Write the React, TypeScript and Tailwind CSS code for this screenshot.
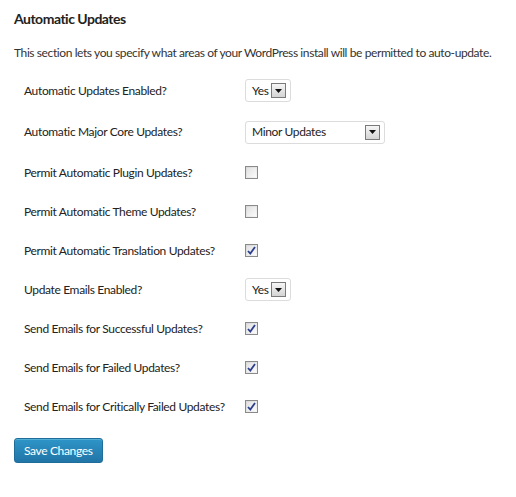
import React from "react";

type Row =
  | { label: string; kind: "select"; value: string; wide?: boolean; h: string }
  | { label: string; kind: "check"; checked: boolean; h: string };

const rows: Row[] = [
  { label: "Automatic Updates Enabled?", kind: "select", value: "Yes", h: "h-[41px]" },
  { label: "Automatic Major Core Updates?", kind: "select", value: "Minor Updates", wide: true, h: "h-[42px]" },
  { label: "Permit Automatic Plugin Updates?", kind: "check", checked: false, h: "h-[39px]" },
  { label: "Permit Automatic Theme Updates?", kind: "check", checked: false, h: "h-[39px]" },
  { label: "Permit Automatic Translation Updates?", kind: "check", checked: true, h: "h-[39px]" },
  { label: "Update Emails Enabled?", kind: "select", value: "Yes", h: "h-[39px]" },
  { label: "Send Emails for Successful Updates?", kind: "check", checked: true, h: "h-[39px]" },
  { label: "Send Emails for Failed Updates?", kind: "check", checked: true, h: "h-[39px]" },
  { label: "Send Emails for Critically Failed Updates?", kind: "check", checked: true, h: "h-[39px]" },
];

function Select({ value, wide }: { value: string; wide?: boolean }) {
  return (
    <div
      className={`shrink-0 flex items-center justify-between h-[23px] border border-[#dcdcdc] rounded-[3px] bg-white pl-[6px] pr-[4px] ${
        wide ? "w-[140px]" : "w-[46px]"
      }`}
    >
      <span className="text-[12px] tracking-[-0.35px] text-[#222] whitespace-nowrap">{value}</span>
      <span className="shrink-0 flex items-center justify-center w-[15px] h-[15px] border border-[#7a7a7a] bg-gradient-to-b from-[#f6f6f6] to-[#d4d4d4]">
        <svg width="7" height="4" viewBox="0 0 7 4">
          <path d="M0 0h7L3.5 4z" fill="#111" />
        </svg>
      </span>
    </div>
  );
}

function Checkbox({ checked }: { checked: boolean }) {
  return (
    <span className="shrink-0 flex items-center justify-center w-[13px] h-[13px] border border-[#8a8a8a] bg-gradient-to-br from-[#d6d6d6] to-[#f7f7f7] p-[1px]">
      <span className="flex items-center justify-center w-full h-full bg-gradient-to-br from-[#e2e2e2] to-[#fafafa]">
        {checked && (
          <svg width="9" height="9" viewBox="0 0 9 9">
            <path d="M1 5l2.3 2.5L8 1" stroke="#2c3f8f" strokeWidth="1.8" fill="none" />
          </svg>
        )}
      </span>
    </span>
  );
}

export default function App() {
  return (
    <div className="w-[516px] h-[497px] bg-white text-[#333] font-['Lato',sans-serif] px-[14px]">
      <h2 className="pt-[10px] text-[14px] tracking-[-0.5px] font-bold text-[#222] leading-[18px]">Automatic Updates</h2>
      <p className="mt-[17px] text-[12px] tracking-[-0.4px] leading-[16px] text-[#333] whitespace-nowrap">
        This section lets you specify what areas of your WordPress install will be permitted to auto-update.
      </p>
      <div className="mt-[9px] flex flex-col">
        {rows.map((r) => (
          <div key={r.label} className={`flex items-center ${r.h}`}>
            <div className="w-[231px] shrink-0 pl-[10px] text-[12px] tracking-[-0.35px] text-[#222] whitespace-nowrap">
              {r.label}
            </div>
            {r.kind === "select" ? <Select value={r.value} wide={r.wide} /> : <Checkbox checked={r.checked} />}
          </div>
        ))}
      </div>
      <button className="mt-[12px] h-[25px] px-[9px] rounded-[3px] border border-[#1f6d9b] bg-gradient-to-b from-[#2e95c8] to-[#2275a7] text-white text-[12px] tracking-[-0.35px] leading-none shadow-[inset_0_1px_0_rgba(120,200,230,0.5)]">
        Save Changes
      </button>
    </div>
  );
}
